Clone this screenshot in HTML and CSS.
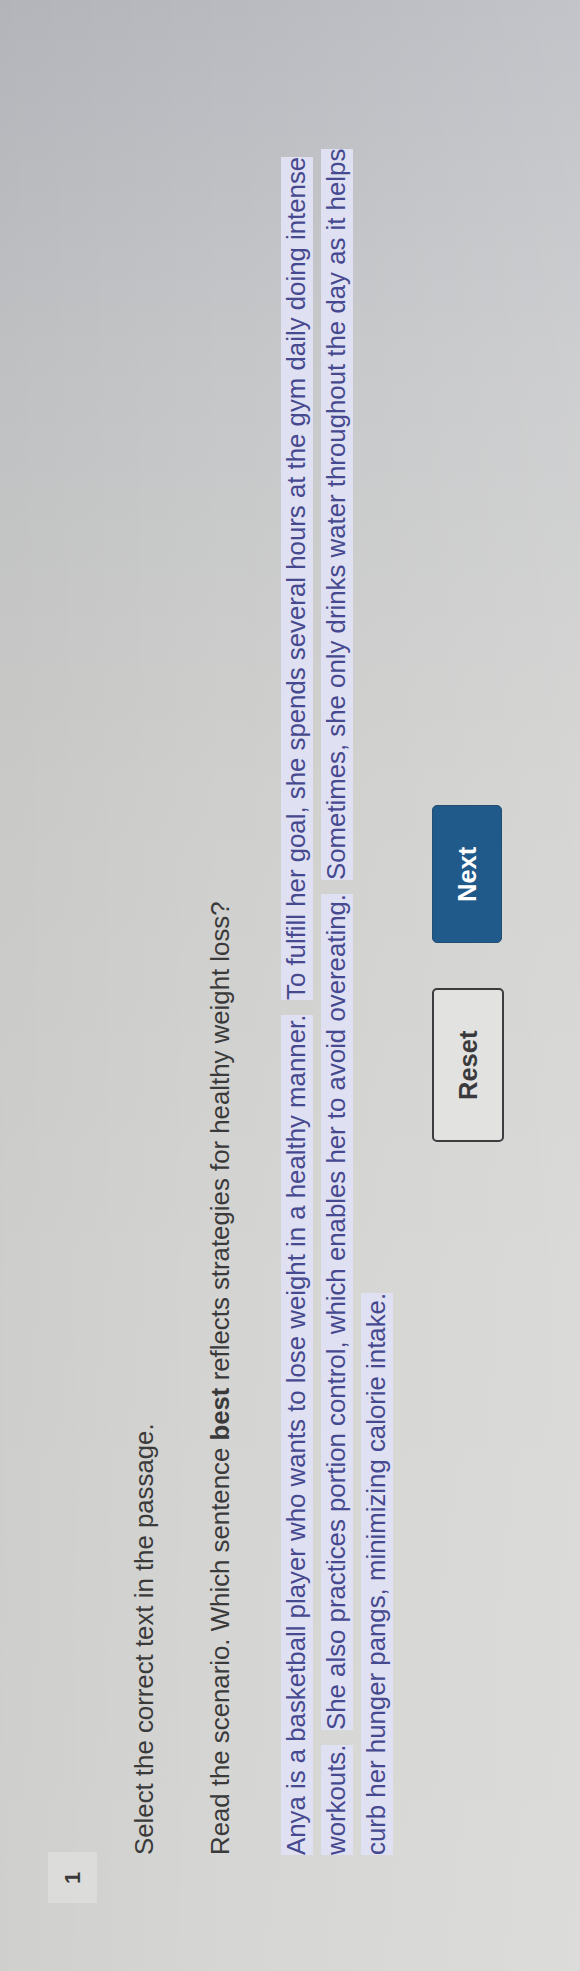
FILE: index.html
```html
<!DOCTYPE html>
<html lang="en">
<head>
<meta charset="utf-8">
<title>Question 1</title>
<link rel="stylesheet" href="styles.css">
</head>
<body>
<div class="stage">
  <section class="question">
    <div class="num">1</div>
    <div class="body">
      <p class="instr">Select the correct text in the passage.</p>
      <p class="prompt">Read the scenario. Which sentence <b>best</b> reflects strategies for healthy weight loss?</p>
      <p class="passage"><span class="sent">Anya is a basketball player who wants to lose weight in a healthy manner.</span>&nbsp; <span class="sent">To fulfill her goal, she spends several hours at the gym daily doing intense workouts.</span>&nbsp; <span class="sent">She also practices portion control, which enables her to avoid overeating.</span>&nbsp; <span class="sent">Sometimes, she only drinks water throughout the day as it helps curb her hunger pangs, minimizing calorie intake.</span></p>
    </div>
  </section>
  <div class="actions">
    <button class="btn reset" type="button">Reset</button>
    <button class="btn next" type="button">Next</button>
  </div>
</div>
</body>
</html>
```

FILE: styles.css
```css
html, body {
  margin: 0;
  padding: 0;
  width: 580px;
  height: 1971px;
  overflow: hidden;
}

body {
  background:
    linear-gradient(to right, rgba(0,0,0,0.03) 0%, rgba(255,255,255,0) 40%, rgba(255,255,255,0.14) 100%),
    linear-gradient(to bottom, #b9bac0 0%, #c5c6c8 18%, #cfcfcd 40%, #d4d4d2 65%, #d6d6d4 100%);
  font-family: "Liberation Sans", Arial, sans-serif;
}

/* The page is photographed sideways: text runs bottom-to-top. */
.stage {
  writing-mode: vertical-rl;
  transform: rotate(180deg);
  width: 580px;
  height: 1971px;
  box-sizing: border-box;
}

.question {
  padding-block-start: 48px;
  padding-inline-start: 68px;
}

.num {
  inline-size: 51px;
  block-size: 49px;
  background: rgba(232, 232, 232, 0.45);
  display: flex;
  align-items: center;
  justify-content: center;
  font-size: 22px;
  font-weight: bold;
  color: #3a3a3a;
}

.body {
  padding-inline-start: 48px;
  inline-size: 1740px;
  font-size: 25.8px;
  color: #3a3a3b;
}

.body p {
  margin: 0;
}

.instr {
  margin-block-start: 28px !important;
  line-height: 38px;
}

.prompt {
  margin-block-start: 38px !important;
  line-height: 38px;
}

.passage {
  margin-block-start: 37px !important;
  line-height: 40px;
  color: #46498f;
}

.sent {
  background: #dfe0f1;
  padding-block: 1px 3px;
}

.actions {
  display: flex;
  justify-content: center;
  align-items: flex-start;
  gap: 45px;
  padding-inline-start: 24px;
  margin-block-start: 36px;
}

.btn {
  font-family: "Liberation Sans", Arial, sans-serif;
  font-weight: bold;
  font-size: 25.5px;
  border-radius: 5px;
  padding: 0;
  cursor: pointer;
}

.reset {
  inline-size: 154px;
  block-size: 72px;
  background: #e2e2e0;
  color: #3a3a3c;
  border: 2.5px solid #3c3c3e;
}

.next {
  inline-size: 138px;
  block-size: 70px;
  background: #1f5a8a;
  color: #ffffff;
  border: 1.5px solid #244d72;
}
```
